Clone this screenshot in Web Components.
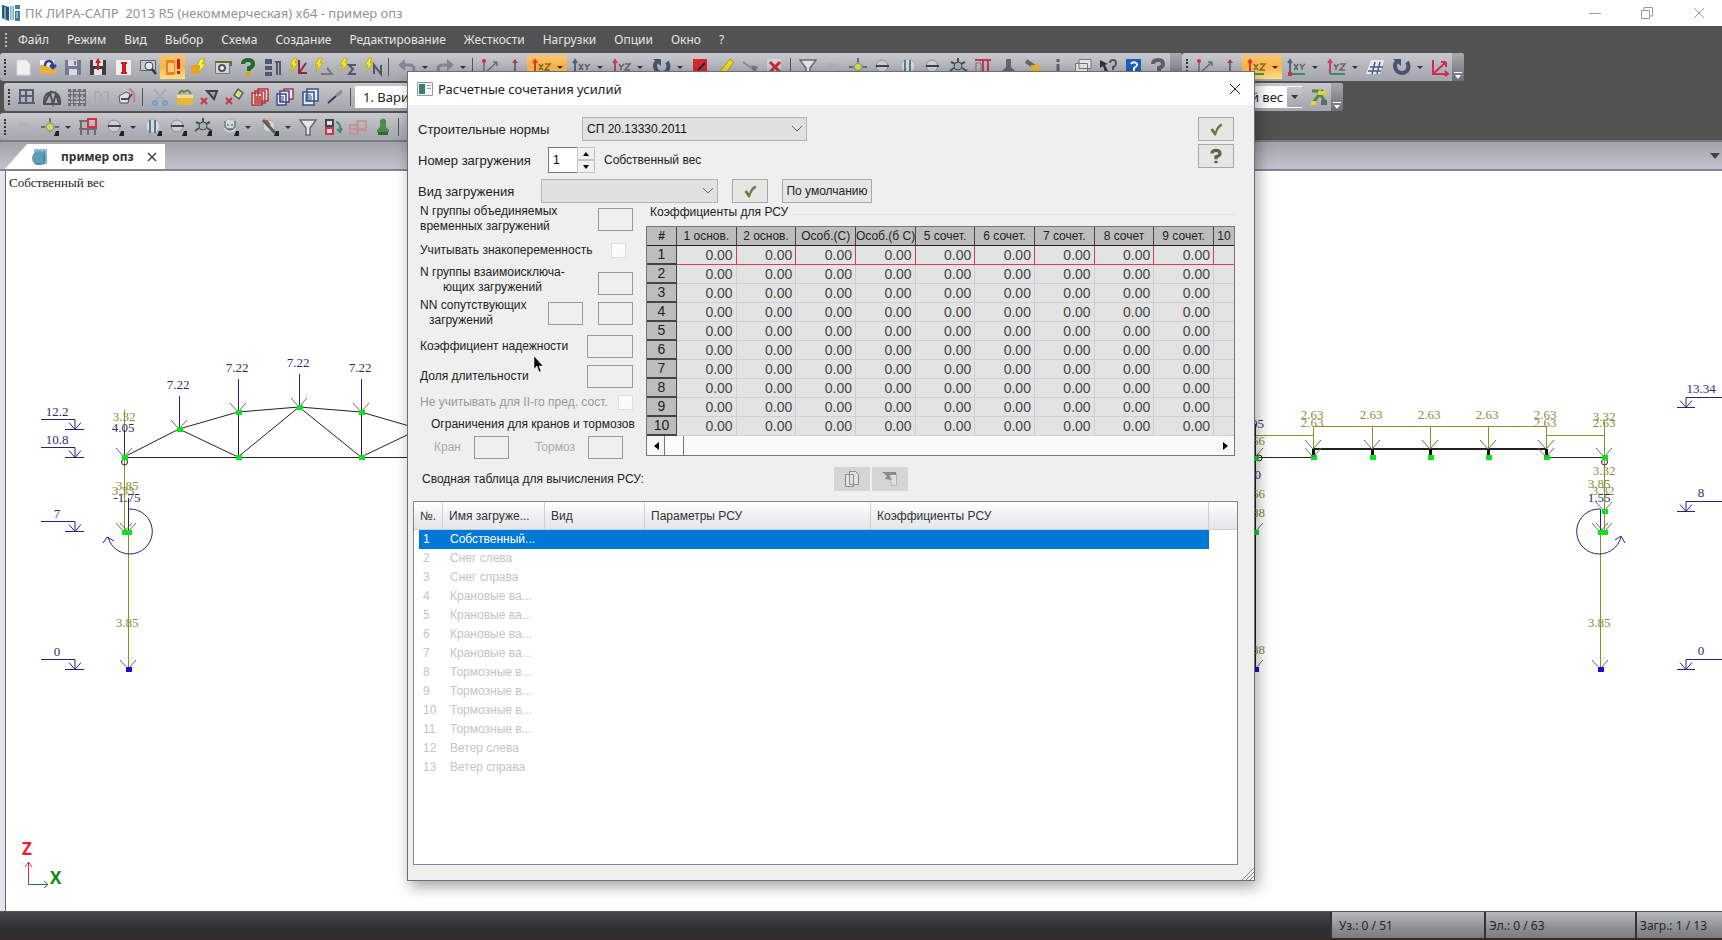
<!DOCTYPE html>
<html lang="ru">
<head>
<meta charset="utf-8">
<title>ПК ЛИРА-САПР 2013 R5</title>
<style>
    body {
        margin: 0;
        height: 100vh;
        overflow: hidden;
        font-family: "Noto Sans", sans-serif;
        font-size: 12px;
    }
</style>
</head>
<body>
<lira-app></lira-app>

<script>
// Toolbar icons, all drawn on a 20x20 grid
const ICONS = {
    page: '<path fill="#f0f0f0" stroke="#d8d8d8" d="M4 3h9l4 4v11H4z"/>',
    open: '<path fill="#f4f4f4" d="M2 3h14v13H2z"/><path fill="#e8b33c" d="M2 8h6l2 2h8v7H2z"/><path fill="none" stroke="#2f3e9b" stroke-width="2.5" d="M7 9q0-5 4-5t4 6M12 8l3 3 3-3"/>',
    save: '<path fill="#77779a" d="M2 3h16v15H2z"/><path fill="#d9d9e2" d="M5 3h9v6H5zM6 12h8v6H6z"/><path fill="#77779a" d="M11 4h2v4h-2z"/>',
    saveas: '<path fill="#3d3d45" d="M2 3h16v15H2z"/><path fill="#e9e0e0" d="M5 3h10v6H5zM6 12h8v6H6z"/><path fill="#d21b2b" d="M9 13V6H7l3-5 3 5h-2v7z"/>',
    text: '<path fill="#f2eeee" d="M3 3h15v15H3z"/><path fill="#d21b2b" d="M8 5h6v2h-1v8h1v2H8v-2h1V7H8z"/>',
    find: '<path fill="#c6cbd2" stroke="#5d626c" d="M2.500 3.500h15v10h-15z"/><circle cx="11" cy="9" r="4" fill="#dfe8ee" stroke="#444"/><path stroke="#333" stroke-width="2.500" d="M14 12l4 5"/>',
    rule: '<path fill="#e0862a" d="M3 3h9v15H3z"/><path fill="#f7c978" d="M5 6h6v9H5z"/><path fill="#c41f2b" d="M14 2h3v10h-3zM14 14h3v3h-3z"/>',
    flash: '<path fill="#e8a323" d="M3 8h9v9H3z"/><path fill="#fff06a" stroke="#c8a400" d="M12 2l-3 7h3l-2 7 8-9h-4l3-5z"/>',
    gear: '<path fill="#d2d6dd" stroke="#777" d="M2.500 4.500h14v12h-14z"/><path stroke="#5a7333" stroke-width="2" fill="none" d="M2 5h16v4"/><circle cx="9" cy="11" r="3" fill="#f3f3f3" stroke="#555" stroke-width="2"/>',
    help: '<path fill="none" stroke="#206b2b" stroke-width="4" d="M5 7q0-4 5-4t5 4q0 3-4 4v3"/><path fill="#e0a21c" d="M8 15h5v4H8z"/>',
    tree: '<path fill="#4d5970" d="M2 2h7v5H2zM2 9h7v4H2zM2 15h7v4H2zM12 4h6v2h-6zM13 4h2v14h-2zM16 6h2v12h-2z"/>',
    calcL: '<path fill="#f5e63a" stroke="#c4b100" d="M6 1L2 8h3l-2 7 7-9H7l2-5z"/><path stroke="#8b2942" stroke-width="2" fill="none" d="M11 3v13h8M11 16l7-10"/>',
    calcA: '<path fill="#f5e63a" stroke="#c4b100" d="M6 1L2 8h3l-2 7 7-9H7l2-5z"/><path stroke="#777" stroke-width="2" fill="none" d="M8 17h11l-5-6"/>',
    calcE: '<path fill="#f5e63a" stroke="#c4b100" d="M6 1L2 8h3l-2 7 7-9H7l2-5z"/><path stroke="#556" stroke-width="2" fill="none" d="M18 8h-7l4 4-4 5h7"/>',
    calcN: '<path fill="#f5e63a" stroke="#c4b100" d="M6 1L2 8h3l-2 7 7-9H7l2-5z"/><path stroke="#556" stroke-width="2" fill="none" d="M11 17V8l7 9V8"/>',
    undo: '<path fill="none" stroke="#85879c" stroke-width="3" d="M5 8h7q5 0 5 4t-5 5"/><path fill="#85879c" d="M1 8l7-6v12z"/>',
    redo: '<path fill="none" stroke="#85878f" stroke-width="3" d="M15 8H8q-5 0-5 4t5 5"/><path fill="#85878f" d="M19 8l-7-6v12z"/>',
    axis3: '<path stroke="#666b7a" stroke-width="1.500" fill="none" d="M4 5v12M4 17L17 5M17 5h-4M17 5v4"/><circle cx="4" cy="4" r="2" fill="#e0284a"/>',
    axisT: '<path stroke="#666b7a" stroke-width="2" fill="none" d="M2 15h16M10 15V5"/><path fill="#a6405a" d="M7 6l3-4 3 4z"/>',
    xz: '<path fill="none" stroke="#e2382c" stroke-width="2" d="M3 17V3M1 6l2-3 2 3"/><path stroke="#3b9a3b" stroke-width="2" d="M3 17h14"/><path fill="none" stroke="#876a28" stroke-width="1.500" d="M7 7l4 6M11 7l-4 6M13 7h5l-5 6h5"/>',
    xy: '<path fill="none" stroke="#5a5f7c" stroke-width="2" d="M3 17V3M1 6l2-3 2 3"/><path stroke="#3a8a6b" stroke-width="2" d="M3 17h15"/><path fill="#e0284a" d="M1 15h4v4H1z"/><path fill="none" stroke="#666" stroke-width="1.500" d="M7 7l4 6M11 7l-4 6M13 7l2 3 3-3M15 10v3"/>',
    yz: '<path fill="none" stroke="#c7425a" stroke-width="2" d="M3 17V3M1 6l2-3 2 3"/><path stroke="#3a8a6b" stroke-width="2" d="M3 17h15"/><path fill="none" stroke="#666" stroke-width="1.500" d="M7 7l2 3 3-3M9 10v3M13 7h5l-5 6h5"/>',
    rot: '<path fill="none" stroke="#4a5270" stroke-width="4" d="M5 4Q1 9 5 14q5 4 10 0 3-5 0-9"/><path fill="#4a5270" d="M1 2h8v7z"/>',
    redbox: '<path fill="#d4282c" d="M3 2h14v16H3z"/><path stroke="#222" stroke-width="2" d="M8 13l7-7"/>',
    pencil: '<path fill="#e8d820" stroke="#a89a20" d="M15 2l4 3-9 12-6 2 2-6z"/>',
    broom: '<path stroke="#8a8d95" stroke-width="2" d="M3 5l14 10"/><path fill="#777" d="M11 8l7 2-4 6z"/>',
    cross: '<path fill="#fff" d="M2 2h14v15H2z" opacity=".3"/><path stroke="#c8283c" stroke-width="3" d="M5 5l10 10M15 5L5 15"/>',
    funnel: '<path fill="#e4e7ea" stroke="#666b70" stroke-width="1.500" d="M2 3h16l-6 8v7H8v-7z"/>',
    dim: '<path fill="#b5b1ba" d="M5 6h10v8H5z"/>',
    node: '<path fill="#7fa892" d="M10 4l6 6-6 6-6-6z"/><circle cx="10" cy="10" r="3" fill="#e6d74a"/><path fill="#222" d="M16 14h3v5h-5z"/><path stroke="#555" stroke-width="1.500" d="M1 10h4M15 10h4M10 1v4"/>',
    disc: '<circle cx="9" cy="9" r="6" fill="#c9ced4" stroke="#888d96"/><path stroke="#3c4350" stroke-width="2" d="M3 9h13"/><path fill="#222" d="M16 14h3v5h-5z"/>',
    bars: '<circle cx="10" cy="9" r="7" fill="#d5dadd" stroke="#aab"/><path stroke="#5b7c86" stroke-width="2" d="M7 3v13M12 3v13"/><path fill="#222" d="M16 14h3v5h-5z"/>',
    mask: '<circle cx="10" cy="9" r="7" fill="#d5dadd" stroke="#aab"/><path fill="none" stroke="#5d7a7c" stroke-width="1.500" d="M5 4v6q5 6 10 0V4M7 8h2M11 8h2M8 12h4"/><path fill="#222" d="M16 14h3v5h-5z"/>',
    star: '<circle cx="10" cy="9" r="4" fill="#9fb6ad" stroke="#445"/><path stroke="#47534f" stroke-width="2" d="M10 1v4M2 14l4-3M14 11l5 3M3 5l4 2M17 5l-4 2"/><path fill="#222" d="M16 14h3v5h-5z"/>',
    slash: '<circle cx="9" cy="9" r="6" fill="#cfd8d6" stroke="#9aa"/><path stroke="#4b6756" stroke-width="3" d="M3 3l12 13"/><path stroke="#c2443c" stroke-width="2" d="M6 3l4 5"/><path fill="#222" d="M16 14h3v5h-5z"/>',
    frame: '<path fill="none" stroke="#77696f" stroke-width="2" d="M3 3v15M10 9v9M17 9v9M1 12h18M1 4h8"/><path fill="none" stroke="#e02c3e" stroke-width="2" d="M10 2h8v8h-8z"/>',
    marks: '<path fill="none" stroke="#c33a50" stroke-width="2" d="M2 3h16M10 3v14M15 3v14"/><path fill="none" stroke="#777" d="M3 6h5v10H3z"/>',
    swap: '<path fill="#d9e6e4" stroke="#40464e" stroke-width="2" d="M3 3h7v6H3z"/><path fill="#eacdd2" stroke="#c33a50" stroke-width="2" d="M3 11h7v6H3z"/><path fill="none" stroke="#3f8b72" stroke-width="2" d="M13 5q5 1 4 9M14 12l3 3 2-4"/>',
    faded: '<path fill="none" stroke="#c9868f" stroke-width="2" opacity=".7" d="M2 8h8v9H2zM9 4h9v9H9zM2 12h14"/>',
    pin: '<path fill="#4d8a4c" d="M7 3q3-3 6 0v7l3 3v2H4v-2l3-3z"/><path fill="#356336" d="M5 15h10v3H5z"/>',
    stamp: '<path fill="#63676c" d="M8 2h5v8l4 4v4H4v-4l4-4z"/>',
    paint: '<path stroke="#666" stroke-width="4" d="M3 4l9 6"/><path fill="#e0b43c" d="M8 8h9v7H8z"/>',
    info: '<path stroke="#5a6068" stroke-width="3" d="M10 7v10M10 2v3"/>',
    stack: '<path fill="#e6e7ea" stroke="#777" d="M6 2.500h12v9H6zM2.500 6.500h12v9h-12z"/>',
    ask: '<path fill="#333" d="M2 3l8 4-3 1 3 6-3 1-2-6-3 2z"/><path fill="none" stroke="#555" stroke-width="2" d="M12 6q0-3 3-3t3 3-3 4v3"/>',
    book: '<path fill="#235fb5" d="M3 2h15v16H3z"/><path fill="none" stroke="#fff" stroke-width="2" d="M8 7q2-3 5-1t-2 5v4"/>',
    quest: '<path fill="none" stroke="#5c5f6a" stroke-width="4" d="M5 7q0-4 5-4t5 4q0 3-4 4v3"/><path fill="#5c5f6a" d="M9 16h4v3H9z"/>',
    plane: '<path fill="#e9ecf5" d="M6 3h13l-4 14H1z"/><path stroke="#4a5a80" stroke-width="1.500" d="M3 14h13M5 10h13M10 5L7 17M15 5l-3 12"/>',
    axisR: '<path fill="none" stroke="#d12c50" stroke-width="2" d="M3 3v14h15M3 17L16 5M16 5h-5M16 5v5M15 14l3 3-3 2"/>',
    grid: '<path fill="none" stroke="#565d6e" stroke-width="2" d="M3 3h13v13H3zM9 3v13M3 9h13M1 16h17"/>',
    truss: '<path fill="none" stroke="#4c5058" stroke-width="2" d="M2 17q-1-11 8-12 9 1 8 12zM2 17l6-11 3 11 3-10 3 10"/>',
    mesh: '<path fill="#6c7078" d="M1 2h18v17H1z"/><path stroke="#c4c7cd" stroke-width="1.500" stroke-dasharray="2 1" d="M5 2v17M10 2v17M15 2v17M1 6h18M1 11h18M1 15h18"/>',
    cols: '<path fill="none" stroke="#a9abb4" stroke-width="2" d="M3 4v14M9 6v12M16 4v14M3 5h5M11 5h5"/>',
    turn: '<path fill="#dedede" stroke="#555" d="M2 9l7-4 4 2-2 9H3z"/><path fill="none" stroke="#4c5058" stroke-width="2" d="M4 12h7l4-5"/><path fill="none" stroke="#c87f86" stroke-width="2" d="M12 2q7 3 5 13"/>',
    cut: '<path fill="none" stroke="#9fb0bb" stroke-width="2" d="M4 2l10 12M16 2L6 14"/><circle cx="5" cy="16" r="2" fill="none" stroke="#6d9fd0" stroke-width="2"/><circle cx="15" cy="16" r="2" fill="none" stroke="#6d9fd0" stroke-width="2"/>',
    box: '<path fill="#e5b93e" d="M2 8h16v10H2z"/><path fill="#f6df83" d="M2 8h16v3H2z"/><path fill="none" stroke="#6b8b3d" stroke-width="2" d="M4 7q2-5 5-2 4-4 7 2"/>',
    delA: '<path fill="#9ca1aa" stroke="#3b4050" stroke-width="2" d="M7 4h10l-3 8z"/><path stroke="#cf3340" stroke-width="2" d="M1 11l6 6M7 11l-6 6"/>',
    delB: '<path fill="#dadf8c" stroke="#4d6350" stroke-width="1.500" d="M13 2l5 4-4 6-5-4z"/><path stroke="#cf3340" stroke-width="2" d="M1 11l6 6M7 11l-6 6"/>',
    copyR: '<path fill="#f7e4e4" stroke="#b23540" stroke-width="1.500" d="M8 2h10v12H8zM5 4h10v12H5zM2 6h10v12H2z"/><path fill="#cf5a55" d="M4 9h7v6H4z"/>',
    copyM: '<path fill="#eef" stroke="#b23540" stroke-width="1.500" d="M9 2h9v10H9z"/><path fill="#eef" stroke="#3e4a86" stroke-width="1.500" d="M5 4h9v11H5zM2 7h9v11H2z"/><path stroke="#3e4a86" d="M4 10h5M4 12h5M4 14h5"/>',
    copyB: '<path fill="#e7eefa" stroke="#34518a" stroke-width="1.500" d="M7 2h11v12H7zM3 5h11v13H3z"/><path stroke="#34518a" d="M5 8h6M5 10h7M5 12h7M5 14h6"/>',
    wand: '<path stroke="#3c4048" stroke-width="2" d="M3 16l8-7"/><path stroke="#8a8d95" stroke-width="3" d="M11 9l6-5"/>',
    loads: '<path fill="none" stroke="#4d8a3c" stroke-width="3" d="M3 4h6l8 12M14 3L3 17"/><path fill="#e6d130" d="M9 4h8v4H9zM2 14h5v4H2z"/><path fill="#5f6470" d="M12 13h6v5h-6z"/>',
    tick: '<path fill="#e9efb0" d="M4 9h9v9H4z"/><path fill="#6c7956" d="M3 11l3-2 3 4Q11 5 17 3l1 3Q12 9 10 18H8z"/>'
};

const icon = (name, size = 20) =>
    `<svg width="${size}" height="${size}" viewBox="0 0 20 20" aria-hidden="true">${ICONS[name]}</svg>`;

const define = (tag, render) => {
    customElements.define(tag, class extends HTMLElement {
        connectedCallback() {
            if (this.shadowRoot) return;
            this.attachShadow({ mode: 'open' }).innerHTML = render(this);
        }
    });
};

define('title-bar', () => `
    <style>
        :host { display: flex; align-items: center; height: 26px; background: #fff; color: #929292; font-size: 13px; flex: none; }
        svg { display: block; }
        .logo { margin: 0 5px 0 2px; }
        span { flex: 1; white-space: pre; }
        button { width: 52px; height: 26px; border: 0; background: none; display: grid; place-items: center; padding: 0; }
        button:last-child { margin-right: -3px; }
    </style>
    <svg class="logo" width="18" height="18" viewBox="0 0 18 18">
        <path fill="#1c5878" d="M0 1l7 2v14l-7-3z"/><path fill="#7fb6c8" d="M8 2h4v14H8z"/><path fill="#3d7f9c" d="M13 1h5v4h-5zM13 7h5v10h-5z"/><path stroke="#d6ebf2" fill="none" d="M3 3v12M10 2v15M15 8v6"/>
    </svg>
    <span>ПК ЛИРА-САПР  2013 R5 (некоммерческая) x64 - пример опз</span>
    <button aria-label="Свернуть"><svg width="12" height="12"><path stroke="#999" d="M0 6.500h12"/></svg></button>
    <button aria-label="Развернуть"><svg width="12" height="12"><path fill="none" stroke="#999" d="M.5 3.500h8v8h-8zM3 3V.5h8.500v8.500H9"/></svg></button>
    <button aria-label="Закрыть"><svg width="12" height="12"><path stroke="#999" d="M1 1l10 10M11 1L1 11"/></svg></button>
`);

define('menu-bar', () => `
    <style>
        :host { display: flex; align-items: center; height: 27px; background: #525252; flex: none; }
        i { width: 3px; height: 14px; margin-left: 5px; border-left: 2px dotted #bbb; box-sizing: border-box; }
        nav { display: flex; margin-left: 1px; }
        button { border: 0; background: none; color: #e6e6e6; font: inherit; padding: 0 9px; }
    </style>
    <i></i>
    <nav>${['Файл', 'Режим', 'Вид', 'Выбор', 'Схема', 'Создание', 'Редактирование', 'Жесткости', 'Нагрузки', 'Опции', 'Окно', '?']
        .map(t => `<button>${t}</button>`).join('')}</nav>
`);

define('tool-strip', el => `
    <style>
        :host {
            display: flex; align-items: center; height: 28px; flex: none;
            background: linear-gradient(#c9c9cd, #b4b5bc 50%, #a3a5ad);
            border-radius: 3px; overflow: hidden;
        }
        i { width: 2px; height: 16px; border-left: 2px dotted #333; margin: 0 4px; box-sizing: border-box; flex: none; }
        .cap { align-self: stretch; width: 12px; background: linear-gradient(#a9a9ad, #6c6e76); display: grid; place-items: end center; flex: none; }
    </style>
    <i></i><slot></slot>
    ${el.hasAttribute('cap') ? '<div class="cap"><svg width="8" height="10"><path fill="#fff" d="M0 1h8v1H0zM1 4h6L4 8z"/></svg></div>' : ''}
`);

// icons="a b* c> |"   * - pressed, > - with a drop-down arrow, | - separator
define('tool-group', el => `
    <style>
        :host { display: flex; align-items: center; flex: none; --split: 38px; }
        :host([split="wide"]) { --split: 40px; }
        button { width: 25px; height: 24px; padding: 0; border: 0; background: none; display: flex; align-items: center; justify-content: center; gap: 4px; }
        button.split { width: var(--split); }
        button.on { background: linear-gradient(#fbc56d, #fbb449 50%, #fde08c); }
        hr { width: 1px; height: 18px; border: 0; margin: 0 4px 0 3px; background: #55565e; }
        svg { flex: none; }
    </style>
    ${el.getAttribute('icons').split(' ').map(t => {
        if (t === '|') return '<hr>';
        const name = t.replace(/[*>]/g, '');
        const caret = t.includes('>');
        return `<button class="${caret ? 'split' : ''} ${t.includes('*') ? 'on' : ''}" aria-label="${name}">${icon(name)}${
            caret ? '<svg width="7" height="5"><path fill="#33343a" d="M1 1h6L4 4z"/></svg>' : ''}</button>`;
    }).join('')}
`);

define('strip-combo', el => `
    <style>
        :host { display: grid; background: #fff; height: 22px; align-items: center; flex: none; font-size: 13px; }
        select, svg { grid-area: 1 / 1; }
        select { appearance: none; border: 0; background: none; font: inherit; color: #222; padding: 0 0 0 8px; width: 100%; height: 22px; }
        svg { justify-self: end; background: linear-gradient(#c9c9cd, #a3a5ad); }
    </style>
    <select aria-label="${el.getAttribute('label')}"><option>${el.getAttribute('value')}</option></select>
    <svg width="15" height="20"><path fill="#333" d="M4 8h7l-3 4z"/></svg>
`);

define('tool-area', () => `
    <style>
        :host { display: block; background: #525252; height: 87px; flex: none; overflow: hidden; }
        .line { display: flex; height: 30px; }
        .second { padding-left: 4px; }
        .first-combo { width: 160px; }
        .load { width: 150px; margin-right: 4px; }
        .gap { width: 637px; }
    </style>
    <div class="line">
        <tool-strip cap>
            <tool-group split="wide" icons="page open save saveas text find rule* flash gear help tree calcL calcA calcE calcN |"></tool-group>
            <tool-group icons="undo> redo> | axis3 axisT"></tool-group>
            <tool-group split="wide" icons="xz*> xy> yz> rot> redbox pencil broom cross | funnel dim node disc bars disc star marks stamp paint info stack ask book quest"></tool-group>
        </tool-strip>
        <tool-strip cap>
            <tool-group split="wide" icons="axis3 axisT xz*> xy> yz> plane rot> axisR"></tool-group>
        </tool-strip>
    </div>
    <div class="line second">
        <tool-strip cap>
            <tool-group icons="grid truss mesh cols turn | cut box delA delB copyR copyM copyB wand |"></tool-group>
            <strip-combo class="first-combo" label="Вариант" value="1. Вариант 1"></strip-combo>
            <div class="gap"></div>
            <strip-combo class="load" label="Загружение" value="1. Собственный вес"></strip-combo>
            <tool-group icons="loads"></tool-group>
        </tool-strip>
    </div>
    <div class="line">
        <tool-strip>
            <tool-group split="wide" icons="dim node> frame disc> bars disc star mask> slash> funnel swap faded pin |"></tool-group>
            <tool-group icons="dim dim dim dim dim dim dim dim"></tool-group>
        </tool-strip>
    </div>
`);

define('tab-strip', () => `
    <style>
        :host {
            display: flex; align-items: flex-end; justify-content: space-between; height: 31px; flex: none; box-sizing: border-box;
            padding: 0 2px 0 5px; border-top: 2px solid #7b7b7f; border-bottom: 2px solid #84858d;
            background: linear-gradient(#a2a3ab, #c3c4cb);
        }
        .tab {
            display: flex; align-items: center; gap: 13px; height: 25px; width: 160px; box-sizing: border-box; padding-left: 26px;
            background: #fff; clip-path: polygon(22px 0, 100% 0, 100% 100%, 0 100%); font-weight: bold; color: #333;
        }
        button { border: 0; background: none; padding: 0; display: flex; }
        .more { align-self: center; }
    </style>
    <div class="tab">
        <svg width="17" height="18"><path fill="#8fb9cc" d="M3 1h13v15H3z"/><circle cx="8" cy="10" r="7" fill="#5f9db8"/><path stroke="#3c7690" fill="none" d="M13 3v13H4"/></svg>
        <span>пример опз</span>
        <button aria-label="Закрыть вкладку"><svg width="10" height="10"><path stroke="#444" stroke-width="1.500" d="M1 1l8 8M9 1L1 9"/></svg></button>
    </div>
    <button class="more" aria-label="Список окон"><svg width="10" height="8"><path fill="#444" d="M0 1h10L5 7z"/></svg></button>
`);

// ---- structural scheme ----
const head = (x, y) => `<path class="thin" d="M${x - 8} ${y - 9}L${x} ${y}L${x + 8} ${y - 9}"/>`;
const node = (x, y) => `<rect class="node" x="${x - 2}" y="${y - 2}" width="6" height="5"/>`;
const base = (x, y) => `<rect class="base" x="${x - 2}" y="${y - 2}" width="6" height="5"/>`;
const txt = (x, y, t, c = 'o', a = 'middle') => `<text class="${c}" x="${x}" y="${y}" text-anchor="${a}">${t}</text>`;
const load = (x, y) => `<path class="navy" d="M${x}.5 ${y - 33}V${y}"/>${head(x, y)}${txt(x - 1, y - 40, '7.22', 'n')}`;
// height marks: left ones point right, right ones point left
const markL = (y, t) => `<path class="navy" d="M41 ${y - 10}h34v10M65 ${y}h19M69 ${y - 7}l6 7 6-7"/>${txt(57, y - 14, t, 'n')}`;
const markR = (y, t) => `<path class="navy" d="M1722 ${y - 10}h-36v10M1677 ${y}h18M1680 ${y - 7}l6 7 6-7"/>${txt(1701, y - 15, t, 'n')}`;

define('scheme-view', () => `
    <style>
        :host { display: block; flex: 1; min-height: 0; background: #fff; border-left: 5px solid #e4e5ea; box-shadow: inset 1px 0 #666; }
        svg { display: block; width: 100%; height: 100%; }
        path { fill: none; stroke: #222; }
        .navy { stroke: #23237c; }
        .olive { stroke: #8a8f2c; }
        .thin { stroke: #6c6c55; }
        .thick { stroke-width: 3; stroke: #111; }
        .beam { stroke-width: 2; }
        .red { stroke: #e0284a; }
        .green { stroke: #2c7a3c; }
        .node { fill: #0be31c; }
        .base { fill: #1d0fd2; }
        text { font: 13px "Liberation Serif", serif; }
        .n { fill: #2d2d6e; }
        .o { fill: #8a8c38; }
        .name { fill: #222; }
        .ax { font: bold 17px "Open Sans", sans-serif; }
        circle { fill: none; stroke: #222; }
    </style>
    <svg viewBox="5 171 1717 740" preserveAspectRatio="xMinYMin meet">
        ${txt(9, 187, 'Собственный вес', 'name', 'start')}
        <path d="M124 457.500H430M124 457L179 429L238 412L299 407L361 412L430 432M179 429L238 457L299 407L361 457L430 424M238.500 412v45M361.500 412v45"/>
        ${load(179, 429)}${load(238, 412)}${load(299, 407)}${load(361, 412)}
        <path class="navy" d="M124.500 430v27M128.500 498v34"/>
        <path class="olive" d="M124.500 410v20M124.500 460v70M128.500 532v137"/>
        ${head(124, 457)}${head(124, 532)}${head(128, 532)}${head(128, 669)}
        <circle cx="124.500" cy="462" r="3"/>
        ${txt(124, 421, '3.32')}${txt(123, 432, '4.05', 'n')}
        ${txt(127, 490, '3.85')}${txt(123, 495, '3.33')}${txt(127, 502, '-1.75', 'n')}${txt(127, 627, '3.85')}
        <path class="navy" d="M129 509a22.500 22.500 0 1 1-21 28M103 543l4-6 7 4"/>
        ${node(124, 457)}${node(179, 429)}${node(238, 412)}${node(299, 407)}${node(361, 412)}${node(238, 457)}${node(361, 457)}
        ${node(124, 532)}${node(128, 532)}${base(128, 669)}
        ${markL(429.5, '12.2')}${markL(457.5, '10.8')}${markL(531.5, '7')}${markL(669.5, '0')}

        <path d="M1254 457.500h59M1546 457.500h59"/>
        <path class="olive" d="M1254 435.500h59M1546 435.500h59M1313 426.500h234"/>
        <path class="beam" d="M1313 449h234"/>
        ${[1313, 1372, 1430, 1488, 1546].map(x =>
            `<path class="olive" d="M${x}.5 426v22"/><path class="thick" d="M${x}.5 449v8"/>${head(x, 449)}${node(x, 457)}${txt(x - 1, 419, '2.63')}`).join('')}
        ${head(1313, 457)}${head(1546, 457)}${head(1604, 457)}
        ${txt(1312, 427, '2.63')}${txt(1545, 427, '2.63')}${txt(1604, 421, '3.32')}${txt(1604, 427, '2.63')}
        <path class="olive" d="M1604.500 422v108M1600.500 532v137"/>
        <path class="navy" d="M1600.500 509v23M1600 509a22.500 22.500 0 1 0 21 28M1615 540l6-4 4 7"/>
        <circle cx="1604.500" cy="462" r="3"/>
        ${txt(1604, 475, '3.32')}${txt(1599, 488, '3.85')}${txt(1603, 495, '3.32')}${txt(1599, 502, '1.55', 'n')}${txt(1599, 627, '3.85')}
        ${head(1604, 511)}${head(1600, 532)}${head(1604, 532)}${head(1600, 669)}
        ${node(1604, 457)}${node(1604, 511)}${node(1600, 532)}${node(1604, 532)}${base(1600, 669)}
        ${markR(407.5, '13.34')}${markR(511.5, '8')}${markR(669.5, '0')}

        <path d="M1255.500 424v245"/><circle cx="1259" cy="458" r="3"/>
        ${head(1255, 457)}${head(1255, 532)}${head(1255, 669)}${node(1255, 458)}${node(1255, 532)}${base(1255, 669)}
        ${txt(1264, 428, '4.05', 'n', 'end')}${txt(1265, 445, '3.66', 'o', 'end')}${txt(1261, 479, '0', 'n', 'end')}
        ${txt(1265, 498, '3.66', 'o', 'end')}${txt(1265, 517, '3.88', 'o', 'end')}${txt(1265, 654, '3.88', 'o', 'end')}

        <path class="red" d="M28.500 884v-22M25 867l3.500-5 3.500 5"/>
        <path class="green" d="M28 884.500h20M44 881l4 3.500-4 3.500"/>
        <text class="ax" x="22" y="855" fill="#ee1c2e">Z</text>
        <text class="ax" x="50" y="884" fill="#12850f">X</text>
    </svg>
`);

define('status-bar', () => `
    <style>
        :host { display: flex; justify-content: flex-end; height: 29px; flex: none; box-sizing: border-box; border-top: 1px solid #55565c; border-bottom: 2px solid #3a2622; background: linear-gradient(#47474d, #303031 60%, #2f2d2d); }
        span { width: 151px; box-sizing: border-box; padding-left: 3px; line-height: 28px; color: #26272b; border-left: 2px solid #333; background: linear-gradient(#b9babd, #8d9094 60%, #7d7a7c); }
        .nodes { width: 154px; padding-left: 7px; }
        .loads { width: 87px; }
    </style>
    <span class="nodes">Уз.: 0 / 51</span><span>Эл.: 0 / 63</span><span class="loads">Загр.: 1 / 13</span>
`);

// ---- dialog parts ----
define('combo-box', el => `
    <style>
        :host { display: inline-grid; height: 24px; align-items: center; box-sizing: border-box; border: 1px solid #b4b4b4; background: #e1e1e1; }
        select, svg { grid-area: 1 / 1; }
        select { appearance: none; width: 100%; height: 22px; border: 0; background: none; font: inherit; color: #111; padding: 0 4px; }
        svg { justify-self: end; margin-right: 4px; pointer-events: none; }
    </style>
    <select aria-label="${el.getAttribute('label')}"><option>${el.getAttribute('value') || ''}</option></select>
    <svg width="10" height="8"><path fill="none" stroke="#666" d="M0 1l5 5 5-5"/></svg>
`);

define('coef-table', () => {
    const cols = ['1 основ.', '2 основ.', 'Особ.(С)', 'Особ.(б С)', '5 сочет.', '6 сочет.', '7 сочет.', '8 сочет', '9 сочет.'];
    const rows = Array.from({ length: 10 }, (_, i) =>
        `<tr><th scope="row">${i + 1}</th>${cols.map(() => '<td>0.00</td>').join('')}<td></td></tr>`);
    return `
    <style>
        :host { display: block; border: 1px solid #777; background: #fafafa; }
        table { border-collapse: separate; border-spacing: 0; table-layout: fixed; width: 100%; }
        th, td { box-sizing: border-box; height: 19px; padding: 0; line-height: 18px; font-size: 14px; overflow: hidden; white-space: nowrap; }
        th { font-weight: normal; background: #bdbdbd; color: #222; border-right: 1px solid #444; border-bottom: 1px solid #444; text-align: center; }
        thead th { font-size: 12px; border-bottom: 1px solid #222; }
        thead th:first-child { font-weight: bold; }
        tbody th { border-bottom-width: 2px; line-height: 17px; }
        td { text-align: right; padding-right: 3px; background: #e3e3e3; color: #444; border-right: 1px solid #cfcfcf; border-bottom: 1px solid #cfcfcf; }
        tbody tr:first-child td { border-color: #dc3c58; }
        th:last-child, td:last-child { border-right: 0; }
        .first { width: 30px; }
        .last { width: 20px; }
        .scroll { display: flex; height: 19px; }
        button { width: 17px; padding: 0; border: 0; background: #f7f7f7; display: grid; place-items: center; }
        .thumb { width: 20px; box-sizing: border-box; border: solid #777; border-width: 0 1px; background: #fcfcfc; }
        .track { flex: 1; background: #fafafa; }
    </style>
    <table>
        <colgroup><col class="first">${cols.map(() => '<col>').join('')}<col class="last"></colgroup>
        <thead><tr><th>#</th>${cols.map(c => `<th scope="col">${c}</th>`).join('')}<th scope="col">10</th></tr></thead>
        <tbody>${rows.join('')}</tbody>
    </table>
    <div class="scroll">
        <button aria-label="Влево"><svg width="6" height="10"><path d="M6 1v8L1 5z"/></svg></button>
        <div class="thumb"></div><div class="track"></div>
        <button aria-label="Вправо"><svg width="6" height="10"><path d="M0 1v8l5-4z"/></svg></button>
    </div>`;
});

define('load-table', () => {
    const names = ['Собственный...', 'Снег слева', 'Снег справа', 'Крановые ва...', 'Крановые ва...', 'Крановые ва...', 'Крановые ва...',
        'Тормозные в...', 'Тормозные в...', 'Тормозные в...', 'Тормозные в...', 'Ветер слева', 'Ветер справа'];
    return `
    <style>
        :host { display: block; border: 1px solid #828790; background: #fff; }
        table { border-collapse: separate; border-spacing: 0; table-layout: fixed; width: 100%; }
        th { height: 28px; box-sizing: border-box; padding: 0 0 0 6px; text-align: left; font-weight: normal; color: #333; background: linear-gradient(#fff, #f0f0f2 50%, #e6e6e9); border-right: 1px solid #d0d0d4; border-bottom: 1px solid #cfcfd3; }
        th:last-child { border-right: 0; }
        td { height: 19px; padding: 0 0 0 7px; line-height: 19px; color: #c4c4c4; overflow: hidden; white-space: nowrap; }
        td:first-child { padding-left: 9px; }
        .sel td { background: #0078d7; color: #fff; }
        .sel td:first-child { background: linear-gradient(90deg, #fff 5px, #0078d7 5px); }
        .sel td:last-child { background: none; }
        .num { width: 29px; }
        .name { width: 102px; }
        .kind { width: 100px; }
        .params { width: 226px; }
        .rest { width: 28px; }
    </style>
    <table>
        <colgroup><col class="num"><col class="name"><col class="kind"><col class="params"><col><col class="rest"></colgroup>
        <thead><tr><th>№.</th><th>Имя загруже...</th><th>Вид</th><th>Параметры РСУ</th><th>Коэффициенты РСУ</th><th></th></tr></thead>
        <tbody>${names.map((n, i) => `<tr class="${i ? '' : 'sel'}"><td>${i + 1}</td><td>${n}</td><td></td><td></td><td></td><td></td></tr>`).join('')}</tbody>
    </table>`;
});

define('rsu-dialog', () => `
    <style>
        :host {
            display: flex; flex-direction: column; box-sizing: border-box;
            border: 1px solid #6d6d72; background: #efeff0; color: #222;
            box-shadow: 3px 6px 14px rgba(0, 0, 0, .35);
            font-family: "Liberation Sans", sans-serif; font-size: 12px;
        }
        header { display: flex; align-items: center; gap: 5px; height: 33px; padding: 0 12px 0 9px; background: #fff; font-family: "Noto Sans", sans-serif; font-size: 13px; flex: none; }
        header span { flex: 1; }
        button { font: inherit; color: #222; padding: 0; box-sizing: border-box; height: 24px; width: 36px; border: 1px solid #a8a8a8; background: #e6e7e4; display: grid; place-items: center; }
        header button { border: 0; width: 14px; background: none; }
        button.text { width: 90px; margin-left: 14px; }
        button.flat { border-color: #d5d5d5; background: #d5d5d5; }
        input { box-sizing: border-box; margin: 0; font: inherit; border: 1px solid #999; background: #efeff0; padding: 0 4px; height: 23px; width: 35px; }
        input[type=checkbox] { appearance: none; width: 15px; height: 15px; border: 1px solid #e0e0e0; background: #fbfbfb; }
        .top { display: grid; grid-template-columns: 1fr 36px; padding: 12px 20px 0 10px; flex: none; }
        .rows { display: grid; gap: 7px; }
        .row { display: flex; align-items: center; height: 24px; }
        .row label { width: 130px; font-size: 13px; white-space: nowrap; }
        .norm { width: 225px; margin-left: 34px; }
        .kind { width: 177px; margin: 0 14px 0 -7px; }
        .side { display: grid; gap: 3px; align-content: start; }
        .spin { display: flex; height: 26px; }
        .spin input { width: 29px; height: 26px; background: #fff; border-right: 0; border-color: #777; }
        .spin div { display: grid; }
        .spin button { width: 18px; height: 13px; border-color: #c4c4c4; background: #f0f0f0; }
        output { margin-left: 9px; }
        .mid { display: grid; grid-template-columns: 225px 1fr; gap: 13px; padding: 0 19px 0 0; flex: none; }
        .params { padding-left: 12px; }
        .p { display: flex; align-items: center; justify-content: space-between; height: 32px; line-height: 15px; }
        .p.m { height: 30px; }
        .p.l { height: 36px; }
        .p.s { height: 22px; }
        .p.end { align-items: flex-end; }
        .p label { white-space: nowrap; }
        .in1 { padding-left: 23px; }
        .in2 { padding-left: 9px; }
        .pair { display: flex; gap: 15px; }
        .w { width: 46px; }
        .check { margin-right: 7px; }
        .off { color: #999; }
        .wide { margin: 0 -16px 0 11px; white-space: nowrap; }
        .limits { display: flex; align-items: center; gap: 13px; height: 24px; padding-left: 14px; color: #aaa; }
        .limits input { margin-right: 13px; }
        fieldset { margin: 0; padding: 0; border: 0; border-top: 1px solid #e4e4e4; min-width: 0; }
        legend { padding: 0 4px; height: 23px; line-height: 18px; }
        .sum { display: flex; align-items: center; height: 24px; padding: 8px 0 10px 14px; flex: none; }
        .sum span { width: 412px; }
        .sum button + button { margin-left: 2px; }
        load-table { flex: 1; margin: 0 16px 15px 5px; min-height: 0; overflow: hidden; }
        .grip { position: absolute; right: 0; bottom: 0; }
    </style>
    <header>
        <svg width="16" height="14"><path fill="#f4f4f4" stroke="#999" d="M.5.5h15v13H.5z"/><path fill="#3b7f72" d="M2 2h6v10H2z"/><path stroke="#aaa" d="M10 3.500h4M10 6.500h4"/></svg>
        <span>Расчетные сочетания усилий</span>
        <button aria-label="Закрыть"><svg width="12" height="12"><path stroke="#222" d="M1 1l10 10M11 1L1 11"/></svg></button>
    </header>
    <div class="top">
        <div class="rows">
            <div class="row"><label>Строительные нормы</label><combo-box class="norm" label="Строительные нормы" value="СП 20.13330.2011"></combo-box></div>
            <div class="row"><label for="num">Номер загружения</label>
                <div class="spin"><input id="num" value="1"><div>
                    <button aria-label="Больше"><svg width="6" height="4"><path d="M0 4h6L3 0z"/></svg></button>
                    <button aria-label="Меньше"><svg width="6" height="4"><path d="M0 0h6L3 4z"/></svg></button></div></div>
                <output>Собственный вес</output></div>
            <div class="row"><label>Вид загружения</label><combo-box class="kind" label="Вид загружения"></combo-box>
                <button aria-label="Применить">${icon('tick', 16)}</button><button class="text">По умолчанию</button></div>
        </div>
        <div class="side">
            <button aria-label="Принять">${icon('tick', 16)}</button>
            <button aria-label="Справка"><svg width="16" height="18" viewBox="0 0 20 20"><path fill="none" stroke="#5e6650" stroke-width="4" d="M5 7q0-4 5-4t5 4q0 3-5 4v3"/><path fill="#5e6650" d="M8 16h4v3H8z"/></svg></button>
        </div>
    </div>
    <div class="mid">
        <div class="params">
            <div class="p"><label for="g1">N группы объединяемых<br>временных загружений</label><input id="g1"></div>
            <div class="p m"><label for="c1">Учитывать знакопеременность</label><input class="check" id="c1" type="checkbox"></div>
            <div class="p m end"><label for="g2">N группы взаимоисключа-<br><span class="in1">ющих загружений</span></label><input id="g2"></div>
            <div class="p l"><label for="g3">NN сопутствующих<br><span class="in2">загружений</span></label><div class="pair"><input id="g3"><input aria-label="Второе сопутствующее"></div></div>
            <div class="p m"><label for="k1">Коэффициент надежности</label><input class="w" id="k1"></div>
            <div class="p m"><label for="k2">Доля длительности</label><input class="w" id="k2"></div>
            <div class="p s off"><label for="c2">Не учитывать для II-го пред. сост.</label><input id="c2" type="checkbox"></div>
            <div class="p s"><span class="wide">Ограничения для кранов и тормозов</span></div>
            <div class="limits"><label for="l1">Кран</label><input id="l1"><label for="l2">Тормоз</label><input id="l2"></div>
        </div>
        <fieldset>
            <legend>Коэффициенты для РСУ</legend>
            <coef-table></coef-table>
        </fieldset>
    </div>
    <div class="sum">
        <span>Сводная таблица для вычисления РСУ:</span>
        <button class="flat" aria-label="Копировать"><svg width="16" height="18"><path fill="#e2e2e6" stroke="#8b8b93" d="M5.500 1.500h6l3 3v10h-9zM1.500 4.500h8v12h-8z"/></svg></button>
        <button class="flat" aria-label="Вставить"><svg width="18" height="16"><path fill="#e0e0dc" stroke="#b5b5b5" d="M8.500 2.500h7v12h-5z"/><path fill="#8c8c84" d="M1 1h14v3H8l3 5-7-1 2-3z"/></svg></button>
    </div>
    <load-table></load-table>
    <svg class="grip" width="12" height="12"><path stroke="#888" d="M0 12L12 0M4 12l8-8M8 12l4-4"/></svg>
`);

define('lira-app', () => `
    <style>
        :host { display: flex; flex-direction: column; height: 100vh; position: relative; }
        /* modal window and mouse pointer float over the workspace */
        rsu-dialog { position: absolute; left: 407px; top: 71px; bottom: 59px; width: 848px; }
        .pointer { position: absolute; left: 533px; top: 355px; }
    </style>
    <title-bar></title-bar>
    <menu-bar></menu-bar>
    <tool-area></tool-area>
    <tab-strip></tab-strip>
    <scheme-view></scheme-view>
    <status-bar></status-bar>
    <rsu-dialog></rsu-dialog>
    <svg class="pointer" width="12" height="18"><path stroke="#fff" stroke-width=".5" d="M1 1v13l3-3 2 6 2-1-2-5h4z"/></svg>
`);
</script>
</body>
</html>
